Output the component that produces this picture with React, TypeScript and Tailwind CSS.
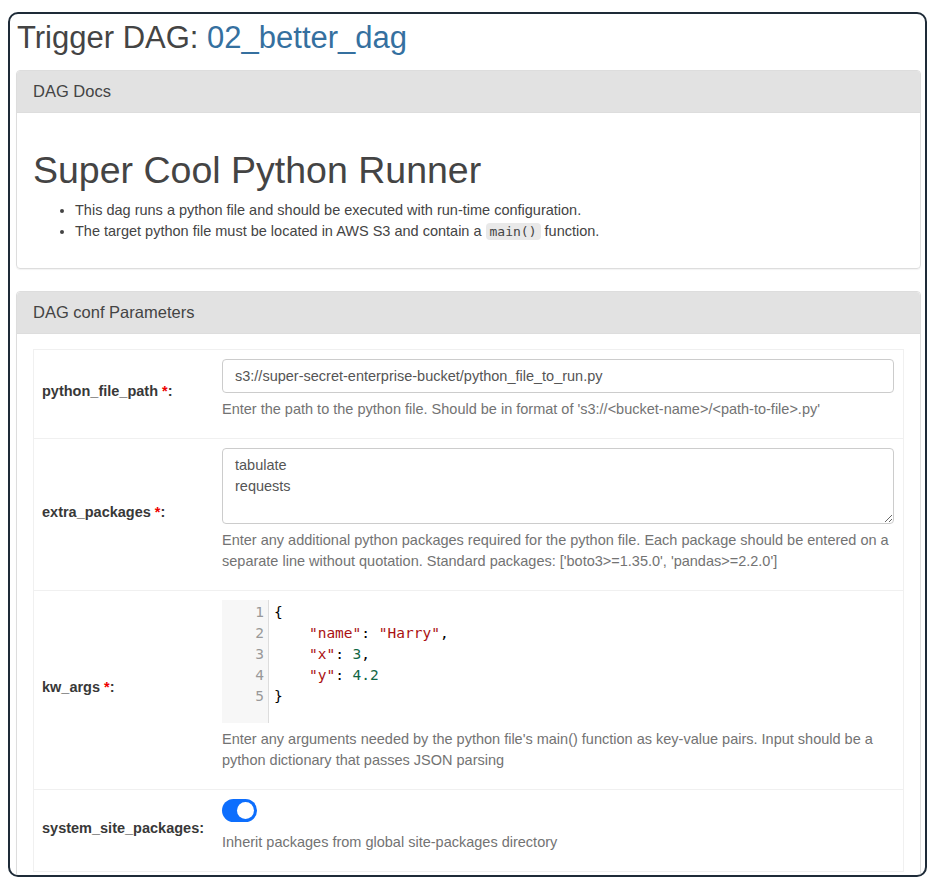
import React from "react";

const sans = { fontFamily: '"Liberation Sans", Arial, sans-serif' };
const mono = { fontFamily: '"DejaVu Sans Mono", "Liberation Mono", monospace' };

function Req() {
  return (
    <>
      {" "}
      <span className="text-[#e00]">*</span>:
    </>
  );
}

function Row({
  label,
  children,
  first,
}: {
  label: React.ReactNode;
  children: React.ReactNode;
  first?: boolean;
}) {
  return (
    <div className={`grid grid-cols-[188px_1fr] ${first ? "" : "border-t border-[#f0f0f0]"}`}>
      <div className="flex items-center pl-[8px] pb-[4px] font-bold text-[14.5px] text-[#383838]">{label}</div>
      <div className="pr-[9px] pt-[9px] pb-[18px]">{children}</div>
    </div>
  );
}

function Help({ children }: { children: React.ReactNode }) {
  return <div className="mt-[6px] text-[14.5px] leading-[21px] text-[#737373]">{children}</div>;
}

export default function App() {
  const lines: React.ReactNode[] = [
    <span>{"{"}</span>,
    <span>
      {"    "}
      <span className="text-[#aa1111]">"name"</span>: <span className="text-[#aa1111]">"Harry"</span>,
    </span>,
    <span>
      {"    "}
      <span className="text-[#aa1111]">"x"</span>: <span className="text-[#116644]">3</span>,
    </span>,
    <span>
      {"    "}
      <span className="text-[#aa1111]">"y"</span>: <span className="text-[#116644]">4.2</span>
    </span>,
    <span>{"}"}</span>,
  ];

  return (
    <div className="w-[936px] h-[887px] bg-white overflow-hidden" style={sans}>
      <div className="ml-[8px] mt-[12px] w-[919px] h-[865px] border-2 border-[#1e2b38] rounded-[10px] overflow-hidden pl-[6px] pr-[4px]">
        <h2 className="mt-[7px] ml-[1px] text-[31px] leading-[33px] text-[#444]">
          Trigger DAG: <span className="text-[#35709f]">02_better_dag</span>
        </h2>

        {/* DAG Docs panel */}
        <div className="mt-[16px] border border-[#dddddd] rounded-[4px] shadow-[0_1px_1px_rgba(0,0,0,0.05)] overflow-hidden">
          <div className="h-[42px] bg-[#e2e2e2] border-b border-[#dddddd] flex items-center px-[16px] text-[16.5px] text-[#444]">
            DAG Docs
          </div>
          <div className="px-[16px] pt-[35px] pb-[26px] text-[#444]">
            <h1 className="text-[37.5px] leading-[44px] text-[#444]">Super Cool Python Runner</h1>
            <ul className="mt-[8px] pl-[42px] list-disc text-[14.5px] leading-[21px]">
              <li>This dag runs a python file and should be executed with run-time configuration.</li>
              <li>
                The target python file must be located in AWS S3 and contain a{" "}
                <code className="bg-[#e9e9e9] rounded-[4px] px-[4px] py-[1px] text-[13px] text-[#444]" style={mono}>
                  main()
                </code>{" "}
                function.
              </li>
            </ul>
          </div>
        </div>

        {/* DAG conf Parameters panel */}
        <div className="mt-[22px] border border-[#dddddd] rounded-[4px] shadow-[0_1px_1px_rgba(0,0,0,0.05)]">
          <div className="h-[42px] bg-[#e2e2e2] border-b border-[#dddddd] flex items-center px-[16px] text-[16.5px] text-[#444] rounded-t-[4px]">
            DAG conf Parameters
          </div>
          <div className="px-[16px] pt-[15px] pb-[20px]">
            <div className="border border-[#f0f0f0]">
              <Row
                first
                label={
                  <span>
                    python_file_path
                    <Req />
                  </span>
                }
              >
                <input
                  readOnly
                  value="s3://super-secret-enterprise-bucket/python_file_to_run.py"
                  className="block w-full h-[34px] border border-[#cccccc] rounded-[4px] px-[12px] text-[14.5px] text-[#555] outline-none"
                  style={sans}
                />
                <Help>Enter the path to the python file. Should be in format of 's3://&lt;bucket-name&gt;/&lt;path-to-file&gt;.py'</Help>
              </Row>

              <Row
                label={
                  <span>
                    extra_packages
                    <Req />
                  </span>
                }
              >
                <textarea
                  readOnly
                  value={"tabulate\nrequests"}
                  className="block w-full h-[76px] border border-[#cccccc] rounded-[4px] px-[12px] py-[6px] text-[14.5px] leading-[21px] text-[#555] outline-none"
                  style={sans}
                />
                <Help>
                  Enter any additional python packages required for the python file. Each package should be entered on a
                  separate line without quotation. Standard packages: ['boto3&gt;=1.35.0', 'pandas&gt;=2.2.0']
                </Help>
              </Row>

              <Row
                label={
                  <span>
                    kw_args
                    <Req />
                  </span>
                }
              >
                <div className="flex h-[123px] bg-white" style={mono}>
                  <div className="w-[47px] bg-[#f7f7f7] border-r border-[#dddddd] pt-[2px] pr-[4px] text-right text-[14.5px] leading-[21px] text-[#999]">
                    {[1, 2, 3, 4, 5].map((n) => (
                      <div key={n}>{n}</div>
                    ))}
                  </div>
                  <div className="pl-[5px] pt-[2px] text-[14.5px] leading-[21px] text-[#000] whitespace-pre">
                    {lines.map((l, i) => (
                      <div key={i}>{l}</div>
                    ))}
                  </div>
                </div>
                <Help>
                  Enter any arguments needed by the python file's main() function as key-value pairs. Input should be a
                  python dictionary that passes JSON parsing
                </Help>
              </Row>

              <Row label={<span>system_site_packages:</span>}>
                <div className="w-[35px] h-[23px] rounded-full bg-[#0d6efd] flex items-center justify-end pr-[3px]">
                  <div className="w-[17px] h-[17px] rounded-full bg-white" />
                </div>
                <div className="mt-[10px] text-[14.5px] leading-[21px] text-[#737373]">
                  Inherit packages from global site-packages directory
                </div>
              </Row>
            </div>
          </div>
        </div>
      </div>
    </div>
  );
}
